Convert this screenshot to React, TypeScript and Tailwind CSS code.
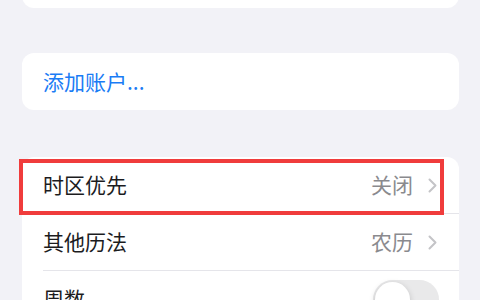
const font = { fontFamily: '"Noto Sans CJK SC", "Noto Sans", sans-serif' };

function Chevron() {
  return (
    <svg width="9" height="15" viewBox="0 0 9 15" fill="none" className="shrink-0">
      <polyline points="1.5,1.5 7.5,7.5 1.5,13.5" stroke="#c4c4c7" strokeWidth="2" strokeLinecap="round" strokeLinejoin="round" />
    </svg>
  );
}

function Row({ label, value }: { label: string; value?: string }) {
  return (
    <div className="flex h-[56px] items-center pl-[21px] pr-[22px]">
      <span className="flex-1 text-[21px] text-[#1c1c1e]">{label}</span>
      {value && <span className="mr-[15px] text-[21px] text-[#8a8a8e]">{value}</span>}
      <Chevron />
    </div>
  );
}

export default function App() {
  return (
    <div className="h-[300px] w-[480px] overflow-hidden bg-[#f2f2f7] pl-[22px] pr-[21px]" style={font}>
      <div className="mt-[-50px] h-[58px] rounded-[12px] bg-white" />

      <div className="mt-[45px] flex h-[57px] items-center rounded-[12px] bg-white pl-[21px]">
        <span className="text-[21px] text-[#1a7cf5]">添加账户...</span>
      </div>

      <div className="relative mt-[47px] rounded-[12px] bg-white">
        <Row label="时区优先" value="关闭" />
        <div className="ml-[21px] h-px bg-[#e5e5ea]" />
        <Row label="其他历法" value="农历" />
        <div className="ml-[21px] h-px bg-[#e5e5ea]" />
        <div className="flex h-[56px] items-center pl-[21px] pr-[20px]">
          <span className="flex-1 text-[21px] text-[#1c1c1e]">周数</span>
          <div className="flex h-[39px] w-[66px] items-center rounded-full bg-[#e9e9ea] p-[2px]">
            <div className="h-[35px] w-[35px] rounded-full bg-white shadow-[0_2px_6px_rgba(0,0,0,0.18)]" />
          </div>
        </div>

        {/* red highlight box */}
        <div className="absolute left-[-3px] top-[2px] h-[56px] w-[425px] border-[4px] border-[#f03c3c]" />
      </div>
    </div>
  );
}
